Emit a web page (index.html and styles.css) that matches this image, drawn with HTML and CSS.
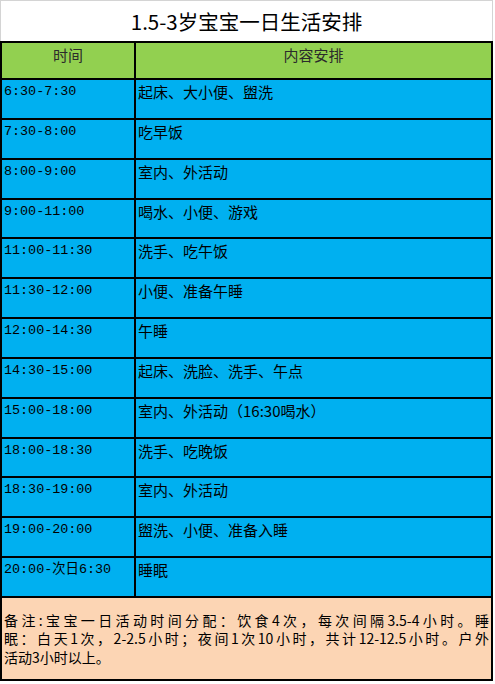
FILE: index.html
```html
<!DOCTYPE html>
<html lang="zh-CN">
<head>
<meta charset="utf-8">
<title>1.5-3岁宝宝一日生活安排</title>
<link rel="stylesheet" href="styles.css">
</head>
<body>
<div class="sheet">
  <div class="title">1.5-3岁宝宝一日生活安排</div>
  <div class="grid">
    <div class="head">时间</div>
    <div class="head">内容安排</div>

    <div class="cell time">6:30-7:30</div>
    <div class="cell text">起床、大小便、盥洗</div>

    <div class="cell time">7:30-8:00</div>
    <div class="cell text">吃早饭</div>

    <div class="cell time">8:00-9:00</div>
    <div class="cell text">室内、外活动</div>

    <div class="cell time">9:00-11:00</div>
    <div class="cell text">喝水、小便、游戏</div>

    <div class="cell time">11:00-11:30</div>
    <div class="cell text">洗手、吃午饭</div>

    <div class="cell time">11:30-12:00</div>
    <div class="cell text">小便、准备午睡</div>

    <div class="cell time">12:00-14:30</div>
    <div class="cell text">午睡</div>

    <div class="cell time">14:30-15:00</div>
    <div class="cell text">起床、洗脸、洗手、午点</div>

    <div class="cell time">15:00-18:00</div>
    <div class="cell text">室内、外活动（16:30喝水）</div>

    <div class="cell time">18:00-18:30</div>
    <div class="cell text">洗手、吃晚饭</div>

    <div class="cell time">18:30-19:00</div>
    <div class="cell text">室内、外活动</div>

    <div class="cell time">19:00-20:00</div>
    <div class="cell text">盥洗、小便、准备入睡</div>

    <div class="cell time">20:00-次日6:30</div>
    <div class="cell text">睡眠</div>

    <div class="note">
      <div class="line full">备注:宝宝一日活动时间分配：饮食4次，每次间隔3.5-4小时。睡</div>
      <div class="line full">眠：白天1次，2-2.5小时；夜间1次10小时，共计12-12.5小时。户外</div>
      <div class="line">活动3小时以上。</div>
    </div>
  </div>
</div>
</body>
</html>
```

FILE: styles.css
```css
html, body {
  margin: 0;
  padding: 0;
  background: #ffffff;
}

.sheet {
  width: 493px;
}

.title {
  box-sizing: border-box;
  height: 41px;
  border: 1px solid #d4d4d4;
  border-bottom: none;
  text-align: center;
  font-family: "Noto Sans CJK SC", "Liberation Sans", sans-serif;
  font-size: 20.5px;
  line-height: 40px;
  color: #000;
}

.grid {
  display: grid;
  grid-template-columns: 132px 355px;
  grid-template-rows: 35px 38px 38px 38px 37px 38px 38px 38px 38px 38px 37px 38px 38px 38px 81px;
  gap: 2px;
  padding: 2px;
  background: #000;
}

.head {
  background: #92d050;
  text-align: center;
  font-family: "Noto Sans CJK SC", sans-serif;
  font-size: 15px;
  line-height: 20px;
  padding-top: 2px;
  color: #2b2b2b;
}

.cell {
  background: #00b0f0;
  color: #000;
  padding: 3px 0 0 2px;
  line-height: 18px;
  white-space: nowrap;
}

.time {
  font-family: "Liberation Mono", "Noto Sans CJK SC", monospace;
  font-size: 13.4px;
}

.text {
  font-family: "Noto Sans CJK SC", sans-serif;
  font-size: 15px;
}

.note {
  grid-column: 1 / 3;
  background: #fcd5b4;
  display: flex;
  flex-direction: column;
  justify-content: center;
  padding: 0 2px;
  font-family: "Noto Sans CJK SC", sans-serif;
  font-size: 14px;
  line-height: 18.5px;
  color: #000;
}

.line {
  white-space: nowrap;
}

.line.full {
  text-align: justify;
  text-align-last: justify;
  white-space: normal;
}
```
